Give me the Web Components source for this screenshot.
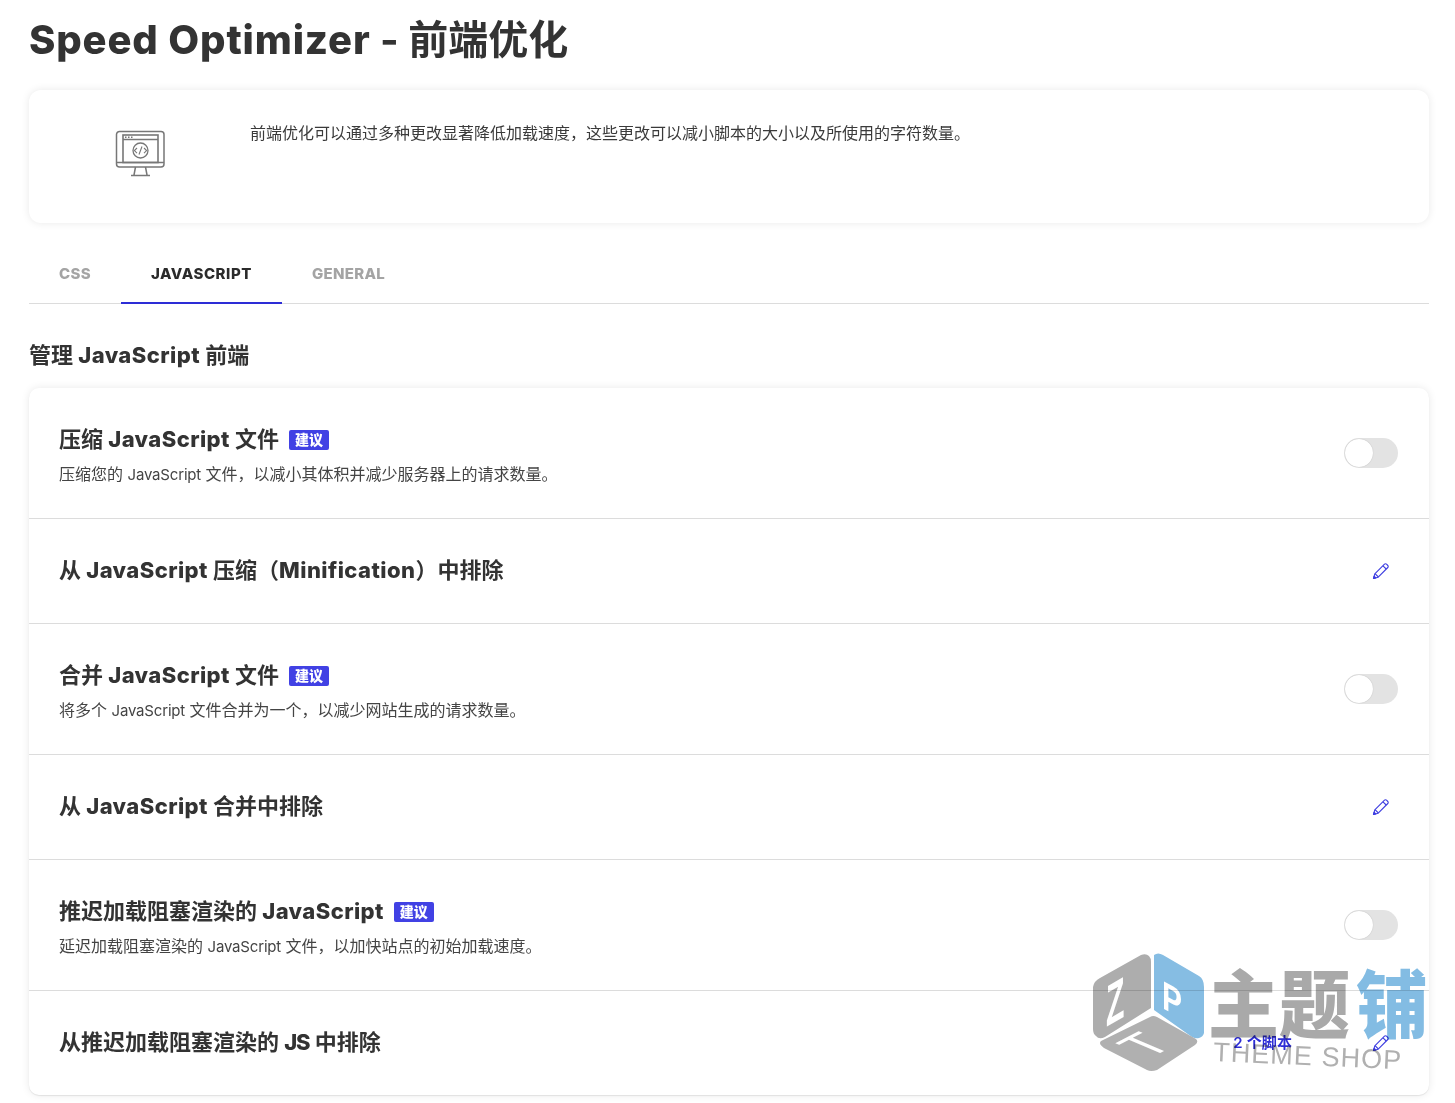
<!DOCTYPE html>
<html lang="zh"><head><meta charset="utf-8"><title>Speed Optimizer</title>
<style>
html,body{margin:0;background:#fff;overflow:hidden}
body{font-family:Inter,"Noto Sans CJK SC",sans-serif;color:#333;height:1103px}
</style></head><body>
<speed-page>
  <page-title>Speed Optimizer - 前端优化</page-title>
  <intro-card>前端优化可以通过多种更改显著降低加载速度，这些更改可以减小脚本的大小以及所使用的字符数量。</intro-card>
  <tab-bar><tab-item>CSS</tab-item><tab-item active>JAVASCRIPT</tab-item><tab-item>GENERAL</tab-item></tab-bar>
  <section-heading>管理 JavaScript 前端</section-heading>
  <settings-card>
    <setting-row recommended toggle heading="压缩 JavaScript 文件">压缩您的 JavaScript 文件，以减小其体积并减少服务器上的请求数量。</setting-row>
    <setting-row edit heading="从 JavaScript 压缩（Minification）中排除"></setting-row>
    <setting-row recommended toggle heading="合并 JavaScript 文件">将多个 JavaScript 文件合并为一个，以减少网站生成的请求数量。</setting-row>
    <setting-row edit heading="从 JavaScript 合并中排除"></setting-row>
    <setting-row recommended toggle heading="推迟加载阻塞渲染的 JavaScript">延迟加载阻塞渲染的 JavaScript 文件，以加快站点的初始加载速度。</setting-row>
    <setting-row edit last count="2 个脚本" heading="从推迟加载阻塞渲染的 JS 中排除"></setting-row>
  </settings-card>
  <zt-watermark></zt-watermark>
</speed-page>
<script>
const FONT='Inter,"Noto Sans CJK SC",sans-serif';
function def(name,html,init){
  customElements.define(name,class extends HTMLElement{
    constructor(){super();this.attachShadow({mode:'open'}).innerHTML=html;}
    connectedCallback(){init&&init.call(this,this.shadowRoot);}
  });
}
// wrap runs of latin letters so their weight and spacing can differ from the CJK text
function wrapLatin(t,style){
  return t.replace(/[A-Za-z][A-Za-z \-]*[A-Za-z]|[A-Za-z]/g,m=>{
    const s=m==='JS'?'letter-spacing:-1.1px;font-weight:800':style;
    return `<span style="${s}">${m}</span>`;
  });
}
def('speed-page',`<style>:host{display:block;position:relative;width:1400px;height:1103px;padding-left:29px;font-family:${FONT};color:#333}</style><slot></slot>`);
def('page-title',`<style>:host{display:block;font-size:40px;font-weight:700;line-height:60px;padding-top:10px;height:60px;margin-bottom:20px;white-space:nowrap}</style><span id="t"></span>`,function(r){r.getElementById('t').innerHTML=wrapLatin(this.textContent,'font-weight:800;letter-spacing:.85px');});
def('intro-card',`<style>:host{display:flex;height:133px;border-radius:12px;background:#fff;box-shadow:0 0 8px rgba(0,0,0,.09);box-sizing:border-box}
.i{width:221px;display:flex;justify-content:center;padding:40px 0 0 2px;box-sizing:border-box}
.t{font-size:16px;line-height:24px;padding-top:31px;color:#3a3a3a;font-weight:400}</style>
<div class="i"><svg width="52" height="48" viewBox="0 0 52 48" fill="none" stroke="#777" stroke-width="1.5"><path d="M4.500 1.500H46a3 3 0 0 1 3 3V34a3 3 0 0 1-3 3H4.500a3 3 0 0 1-3-3V4.500a3 3 0 0 1 3-3z"/><path d="M1.500 32.500H49" /><rect x="8" y="5" width="35" height="27.500" stroke-width="1.600"/><path d="M8 9.500H43"/><path d="M10 7.300h1.500M13 7.300h1.500M16 7.300h1.500" stroke-width="1.400"/><circle cx="25.500" cy="20.500" r="7.500" stroke-width="1.300"/><path d="M22 18l-2.600 2.600L22 23.200M29 18l2.600 2.600L29 23.200M27 16.500l-3 8" stroke-width="1.100"/><path d="M20.500 37l-1.500 8M30.500 37l1.500 8M16 45.500H35" stroke-width="1.500"/></svg></div>
<div class="t"><slot></slot></div>`);
def('tab-bar',`<style>:host{display:flex;height:81px;box-sizing:border-box;border-bottom:1px solid #dcdcdc;align-items:stretch}</style><slot></slot>`);
def('tab-item',`<style>:host{display:block;box-sizing:border-box;height:81px;padding:40px 30px 0;font-size:15px;font-weight:800;line-height:22px;color:#a4a4a4;letter-spacing:.3px}
:host([active]){color:#2b2b2b;border-bottom:2px solid #2d2dd6;letter-spacing:.55px}</style><slot></slot>`);
def('section-heading',`<style>:host{display:block;font-size:22px;font-weight:700;line-height:32px;padding-top:35px;height:32px;margin-bottom:17px;white-space:nowrap}</style><span id="t"></span>`,function(r){r.getElementById('t').innerHTML=wrapLatin(this.textContent,'font-weight:800;letter-spacing:.45px');});
def('settings-card',`<style>:host{display:block;border-radius:10px;background:#fff;box-shadow:0 0 8px rgba(0,0,0,.09),0 1px 1px rgba(0,0,0,.08)}</style><slot></slot>`);
def('rec-badge',`<style>:host{display:inline-block;width:40px;height:20px;line-height:20px;text-align:center;background:#4141e4;color:#fff;font-size:14px;font-weight:900;border-radius:2px}</style><slot></slot>`);
def('toggle-switch',`<style>:host{display:block;width:54px;height:30px;border-radius:15px;background:#e3e3e3;position:relative}
i{position:absolute;left:1px;top:1px;width:28px;height:28px;border-radius:50%;background:#fff;box-shadow:0 0 1px rgba(0,0,0,.25)}</style><i></i>`);
def('edit-pencil',`<style>:host{display:block;width:18px;height:18px}svg{display:block}</style><svg width="18" height="18" viewBox="0 0 18 18" fill="none" stroke="#3d3de0" stroke-width="1.100" stroke-linejoin="round"><path d="M1.500 16.500l1.300-4.700L12.500 2.200a1.400 1.400 0 0 1 2 0l1.300 1.300a1.400 1.400 0 0 1 0 2L6.200 15.200z"/><path d="M11 3.800l3.200 3.200M3 11.600l3.400 3.400"/><path d="M1.500 16.500l.6-2.300 1.700 1.700z" fill="#3d3de0"/></svg>`);
def('setting-row',`<style>:host{display:flex;align-items:center;box-sizing:border-box;padding:30px 31px 30px 30px;border-bottom:1px solid #dcdcdc;position:relative}
:host([last]){border-bottom:0}
:host([edit]){padding-top:30px;padding-bottom:32px}
.m{flex:1;min-width:0}
.h{display:flex;align-items:center;font-size:22px;font-weight:700;line-height:42px;height:42px;white-space:nowrap;color:#333}
rec-badge{margin:2px 0 0 10px}
.d{font-size:16px;line-height:28px;height:28px;color:#444;white-space:nowrap}
.c{font-size:15px;font-weight:600;color:#2d2dd6;margin:0 80px 1px 0;white-space:nowrap;letter-spacing:.1px}
edit-pencil{margin:1px 8px 0 0}
</style><div class="m"><div class="h"><span id="h"></span></div><div class="d" id="d"><slot></slot></div></div><span class="c" id="c"></span>`,function(r){
  r.getElementById('h').innerHTML=wrapLatin(this.getAttribute('heading'),'font-weight:800;letter-spacing:.43px');
  const hd=r.querySelector('.h');
  if(this.hasAttribute('recommended')){const b=document.createElement('rec-badge');b.textContent='建议';hd.appendChild(b);}
  const d=r.getElementById('d');
  const desc=this.textContent.trim();
  if(desc){d.innerHTML=wrapLatin(desc,'font-size:15px;letter-spacing:-.18px');}else d.remove();
  const c=r.getElementById('c');
  if(this.hasAttribute('count'))c.textContent=this.getAttribute('count');else c.remove();
  if(this.hasAttribute('toggle'))r.appendChild(document.createElement('toggle-switch'));
  if(this.hasAttribute('edit'))r.appendChild(document.createElement('edit-pencil'));
});
def('zt-watermark',`<style>:host{position:absolute;left:1090px;top:950px;width:345px;height:130px;mix-blend-mode:multiply;pointer-events:none}
svg{display:block;overflow:visible}text{font-family:"Noto Sans CJK SC",sans-serif;font-weight:900}</style>
<svg width="345" height="130" viewBox="0 0 345 130">
<g transform="translate(-56 -39)">
<path d="M66 67L107 44Q112 42 115 45Q117 47 117 51L117 97L71 126Q65 129 62 125Q59 123 59 118V76Q60 70 66 67Z" fill="#adadad"/>
<path d="M120 44Q124 41 129 44L165 65Q170 68 170 76V122Q169 126 165 127Q162 128 158 126L120 99Z" fill="#86bde3"/>
<path d="M67 130L116 106Q119 104 123 106L162 128Q165 131 161 134L123 159Q117 161 113 159L70 137Q64 133 67 130Z" fill="#b0b0b0"/>
<text transform="matrix(.52 -.3 0 1 72 116)" font-size="58" fill="#fff" style="font-family:'Liberation Sans';font-weight:700">Z</text>
<text transform="matrix(.75 .4 0 1 128 97)" font-size="40" fill="#fff" style="font-family:'Liberation Sans';font-weight:700">P</text>
<text transform="matrix(1.37 -.71 1.7 .72 115.500 147.500)" font-size="30" fill="#fff" style="font-family:'Liberation Sans';font-weight:400">T</text>
</g>
<text x="118" y="82" font-size="74" fill="#a9a9a9" textLength="142" lengthAdjust="spacingAndGlyphs">主题</text>
<text x="266" y="82" font-size="74" fill="#83bce3" textLength="72" lengthAdjust="spacingAndGlyphs">铺</text>
<text x="123" y="111" font-size="27" fill="#b0b0b0" textLength="188" lengthAdjust="spacing" style="font-family:'Liberation Sans';font-weight:400" transform="rotate(2.500 123 111)">THEME SHOP</text>
</svg>`);
</script></body></html>
